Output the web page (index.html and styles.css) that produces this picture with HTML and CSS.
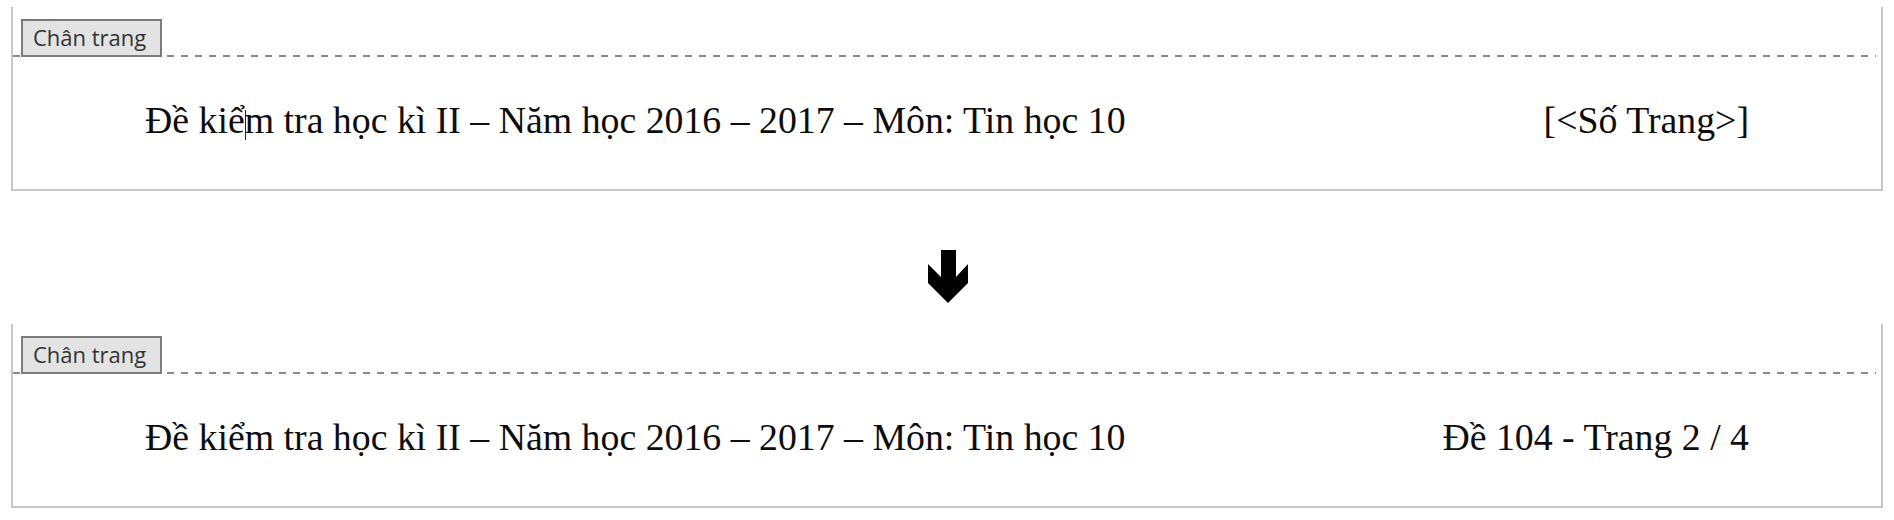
FILE: index.html
```html
<!DOCTYPE html>
<html lang="vi">
<head>
<meta charset="utf-8">
<title>Chân trang</title>
<link rel="stylesheet" href="styles.css">
</head>
<body>
<div class="page">
  <section class="panel">
    <div class="tab-row"><span class="tab">Chân trang</span></div>
    <div class="content">
      <span class="text">Đề kiể<span class="caret"></span>m tra học kì II – Năm học 2016 – 2017 – Môn: Tin học 10</span>
      <span class="text">[&lt;Số Trang&gt;]</span>
    </div>
  </section>
  <div class="arrow-row">
    <svg class="arrow" width="40" height="53" viewBox="0 0 40 53" aria-hidden="true">
      <polygon points="13,0 28,0 28,27 40,14 40,33 20,53 0,33 0,14 13,27" fill="#000"/>
    </svg>
  </div>
  <section class="panel">
    <div class="tab-row"><span class="tab">Chân trang</span></div>
    <div class="content">
      <span class="text">Đề kiểm tra học kì II – Năm học 2016 – 2017 – Môn: Tin học 10</span>
      <span class="text">Đề 104 - Trang 2 / 4</span>
    </div>
  </section>
</div>
</body>
</html>
```

FILE: styles.css
```css
html, body {
  margin: 0;
  padding: 0;
  background: #ffffff;
}

.page {
  display: flex;
  flex-direction: column;
  padding-top: 7px;
}

.panel {
  margin-left: 11px;
  width: 1868px;
  border-left: 2px solid #c8c8c8;
  border-right: 2px solid #c8c8c8;
  border-bottom: 2px solid #c8c8c8;
  display: flex;
  flex-direction: column;
}

.tab-row {
  display: flex;
  padding: 12px 5px 0 8px;
  height: 50px;
  box-sizing: border-box;
  background-image: repeating-linear-gradient(to right, #8a8a8a 0 7px, transparent 7px 14px);
  background-size: calc(100% - 5px) 2px;
  background-position: left bottom;
  background-repeat: no-repeat;
}

.tab {
  display: flex;
  align-items: center;
  justify-content: flex-start;
  box-sizing: border-box;
  width: 141px;
  height: 38px;
  border: 2px solid #7c7c7c;
  background: #e3e3e3;
  color: #333333;
  font-family: "Open Sans", "Noto Sans", sans-serif;
  font-size: 22px;
  line-height: 1;
  padding: 0 0 2px 10px;
  white-space: nowrap;
}

.content {
  display: flex;
  justify-content: space-between;
  align-items: flex-start;
  padding: 43px 132px 0 132px;
  height: 132px;
  box-sizing: border-box;
}

.text {
  font-family: "Liberation Serif", "Times New Roman", serif;
  font-size: 37.8px;
  line-height: 40px;
  color: #0d0d0d;
  white-space: nowrap;
}

.caret {
  display: inline-block;
  width: 1px;
  height: 30px;
  margin-right: -1px;
  background: #222222;
  vertical-align: -7px;
}

.arrow-row {
  display: flex;
  justify-content: center;
  height: 133px;
  padding-left: 1px;
}

.arrow {
  margin-top: 59px;
  display: block;
}
```
